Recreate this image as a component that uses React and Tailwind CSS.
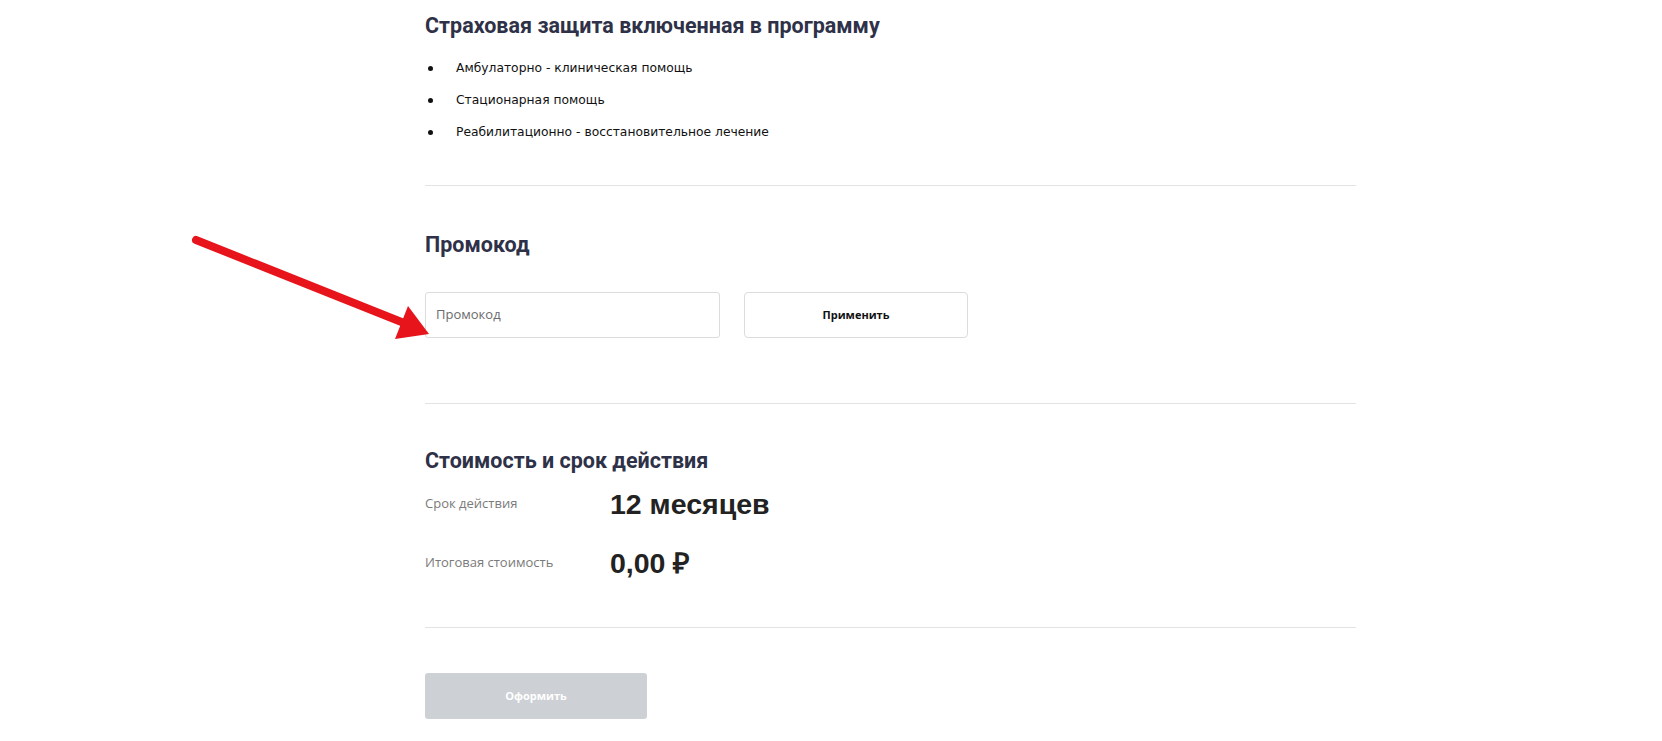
import React from "react";

const heading = "font-['Roboto',sans-serif] font-bold text-[#2e3147] text-[21.5px] leading-[28px]";

function Bullet({ children }) {
  return (
    <li className="flex items-center h-[32px]">
      <span className="ml-[3px] w-[5px] h-[5px] rounded-full bg-[#111]" />
      <span className="ml-[23px] font-['DejaVu_Sans',sans-serif] text-[12.3px] text-[#111]">{children}</span>
    </li>
  );
}

export default function App() {
  return (
    <div className="relative w-full min-h-[741px] bg-white overflow-hidden">
      <div className="ml-[425px] w-[931px] flex flex-col">
        <h2 className={`${heading} mt-[12px]`}>
          Страховая защита включенная в программу
        </h2>
        <ul className="mt-[12px] flex flex-col">
          <Bullet>Амбулаторно - клиническая помощь</Bullet>
          <Bullet>Стационарная помощь</Bullet>
          <Bullet>Реабилитационно - восстановительное лечение</Bullet>
        </ul>
        <div className="mt-[37px] h-px bg-[#e3e3e3]" />

        <h2 className={`${heading} mt-[45px]`}>Промокод</h2>
        <div className="mt-[33px] flex gap-[24px]">
          <div className="w-[295px] h-[46px] border border-[#dcdcdc] rounded-[3px] flex items-center px-[10px]">
            <span className="font-['Open_Sans',sans-serif] text-[13px] text-[#6b6b6b]">Промокод</span>
          </div>
          <button className="w-[224px] h-[46px] border border-[#dcdcdc] rounded-[4px] bg-white flex items-center justify-center font-['Open_Sans',sans-serif] font-bold text-[11px] text-[#111]">
            Применить
          </button>
        </div>
        <div className="mt-[65px] h-px bg-[#e3e3e3]" />

        <h2 className={`${heading} mt-[43px]`}>Стоимость и срок действия</h2>
        <div className="mt-[9px] flex items-center h-[40px]">
          <span className="w-[185px] font-['Open_Sans',sans-serif] text-[13px] text-[#7a7a7a]">Срок действия</span>
          <span className="font-['Liberation_Sans',sans-serif] font-bold text-[28.5px] text-[#222]">12 месяцев</span>
        </div>
        <div className="mt-[19px] flex items-center h-[40px]">
          <span className="w-[185px] font-['Open_Sans',sans-serif] text-[13px] text-[#7a7a7a]">Итоговая стоимость</span>
          <span className="font-['Liberation_Sans',sans-serif] font-bold text-[28.5px] text-[#222]">0,00 ₽</span>
        </div>
        <div className="mt-[44px] h-px bg-[#e3e3e3]" />

        <button className="mt-[45px] w-[222px] h-[46px] rounded-[3px] bg-[#cdd0d5] flex items-center justify-center font-['Open_Sans',sans-serif] font-bold text-[11px] text-white">
          Оформить
        </button>
      </div>

      <svg className="absolute left-0 top-0 pointer-events-none" width="460" height="360" viewBox="0 0 460 360">
        <line x1="196" y1="240" x2="404" y2="323" stroke="#e8141b" strokeWidth="8" strokeLinecap="round" />
        <polygon points="429,334 395,339 408,306" fill="#e8141b" />
      </svg>
    </div>
  );
}
